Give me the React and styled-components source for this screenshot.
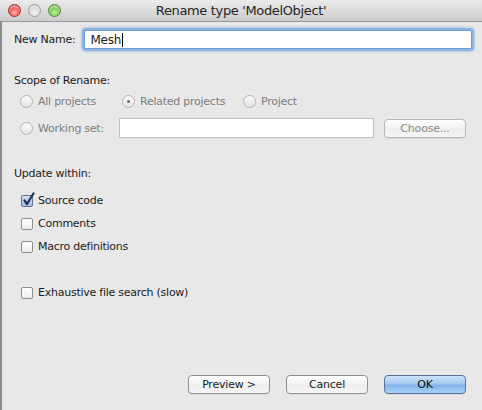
import styled, { createGlobalStyle } from "styled-components";

const GlobalStyle = createGlobalStyle`
  html, body {
    margin: 0;
    padding: 0;
    background: #e8e8e8;
  }
  body {
    font-family: "DejaVu Sans", "Liberation Sans", sans-serif;
    font-size: 11px;
    letter-spacing: -0.25px;
    color: #1b1b1b;
  }
`;

const Window = styled.div`
  display: flex;
  flex-direction: column;
  width: 482px;
  height: 410px;
  background: #e8e8e8;
  overflow: hidden;
`;

const TitleBar = styled.div`
  display: grid;
  grid-template-columns: 1fr auto 1fr;
  align-items: center;
  height: 21px;
  padding: 0 8px;
  background: linear-gradient(#ebebeb, #cbcbcb);
  border-bottom: 1px solid #9a9a9a;
`;

const Lights = styled.div`
  display: flex;
  gap: 7px;
`;

const Light = styled.span`
  width: 13px;
  height: 13px;
  border-radius: 50%;
  box-sizing: border-box;
  border: 1px solid ${(p) => p.$edge};
  background: radial-gradient(
    circle at 50% 70%,
    ${(p) => p.$light} 0%,
    ${(p) => p.$mid} 55%,
    ${(p) => p.$dark} 100%
  );
  box-shadow: inset 0 2px 2px rgba(255, 255, 255, 0.6);
`;

const Title = styled.div`
  font-size: 13px;
  color: #262626;
  letter-spacing: -0.35px;
`;

const Body = styled.div`
  flex: 1;
  display: flex;
  flex-direction: column;
  padding: 8px 16px 16px 12px;
  border-left: 2px solid #8c8c8c;
`;

const NameRow = styled.div`
  display: flex;
  align-items: center;
  gap: 9px;
`;

const Label = styled.span`
  color: ${(p) => (p.$disabled ? "#7d7d7d" : "#1b1b1b")};
  white-space: nowrap;
`;

const NameInput = styled.div`
  flex: 1;
  height: 17px;
  margin-right: -6px;
  background: #fff;
  border: 1px solid #6f9bd2;
  box-shadow: 0 0 0 2px #8fb4e2, 0 0 2px 3px rgba(120, 160, 215, 0.45);
  border-radius: 2px;
  display: flex;
  align-items: center;
  padding-left: 5px;
  font-size: 12px;
`;

const Caret = styled.span`
  display: inline-block;
  width: 1px;
  height: 14px;
  background: #000;
  margin-left: 1px;
`;

const SectionTitle = styled.div`
  margin-top: ${(p) => p.$gap}px;
`;

const OptionRow = styled.div`
  display: flex;
  align-items: center;
  margin-top: ${(p) => p.$gap}px;
  padding-left: 6px;
`;

const Option = styled.label`
  display: flex;
  align-items: center;
  gap: 5px;
  flex-shrink: 0;
  width: ${(p) => (p.$width ? `${p.$width}px` : "auto")};
`;

const Radio = styled.span`
  position: relative;
  width: 13px;
  height: 13px;
  border-radius: 50%;
  box-sizing: border-box;
  border: 1px solid #b4b4b4;
  background: linear-gradient(#fafafa, #e4e4e4);
  flex-shrink: 0;
  &::after {
    content: "";
    display: ${(p) => (p.$checked ? "block" : "none")};
    position: absolute;
    left: 4px;
    top: 4px;
    width: 3px;
    height: 3px;
    border-radius: 50%;
    background: #6a6a6a;
  }
`;

const SetInput = styled.div`
  flex: 1;
  height: 18px;
  background: #fff;
  border: 1px solid #c2c2c2;
`;

const Button = styled.button`
  width: ${(p) => p.$width || 82}px;
  height: 19px;
  padding: 0;
  box-sizing: border-box;
  font-family: inherit;
  font-size: 11px;
  letter-spacing: -0.2px;
  border-radius: 4px;
  flex-shrink: 0;
  margin-left: ${(p) => p.$left || 0}px;
  color: ${(p) => (p.$disabled ? "#8a8a8a" : p.$primary ? "#0d0d0d" : "#1b1b1b")};
  border: 1px solid
    ${(p) => (p.$disabled ? "#b8b8b8" : p.$primary ? "#5b6f9c" : "#8f8f8f")};
  background: ${(p) =>
    p.$primary
      ? "linear-gradient(#cfe3f8 0%, #a3c9ef 45%, #7fb3ea 55%, #a9d2f7 100%)"
      : "linear-gradient(#ffffff, #f1f1f1 50%, #ececec 51%, #f6f6f6)"};
  box-shadow: 0 1px 0 rgba(0, 0, 0, 0.06);
`;

const CheckRow = styled.label`
  display: flex;
  align-items: center;
  gap: 5px;
  margin-top: ${(p) => p.$gap}px;
  padding-left: 7px;
`;

const Box = styled.span`
  position: relative;
  width: 12px;
  height: 12px;
  box-sizing: border-box;
  border-radius: 2px;
  border: 1px solid ${(p) => (p.$checked ? "#5e6f94" : "#8e8e8e")};
  background: ${(p) =>
    p.$checked
      ? "linear-gradient(#d5e4f6, #9fbde4)"
      : "linear-gradient(#ffffff, #ececec)"};
  flex-shrink: 0;
`;

const Tick = styled.svg`
  position: absolute;
  left: 0;
  top: -4px;
`;

const Footer = styled.div`
  margin-top: auto;
  display: flex;
  justify-content: flex-end;
  gap: 16px;
`;

function Check({ checked, children, gap }) {
  return (
    <CheckRow $gap={gap}>
      <Box $checked={checked}>
        {checked && (
          <Tick width="13" height="14" viewBox="0 0 13 14">
            <path
              d="M2.5 8.5 L5 12 L11.5 1.5"
              fill="none"
              stroke="#1c2e57"
              strokeWidth="2.2"
              strokeLinecap="round"
              strokeLinejoin="round"
            />
          </Tick>
        )}
      </Box>
      <Label>{children}</Label>
    </CheckRow>
  );
}

export default function App() {
  return (
    <Window>
      <GlobalStyle />
      <TitleBar>
        <Lights>
          <Light $edge="#a52a2a" $light="#ffb3b3" $mid="#f0474a" $dark="#c31f24" />
          <Light $edge="#9d9d9d" $light="#f4f4f4" $mid="#d6d6d6" $dark="#b3b3b3" />
          <Light $edge="#4b8a2c" $light="#c6f3a6" $mid="#73c54a" $dark="#3f9a1f" />
        </Lights>
        <Title>Rename type 'ModelObject'</Title>
        <span />
      </TitleBar>
      <Body>
        <NameRow>
          <Label>New Name:</Label>
          <NameInput>
            Mesh
            <Caret />
          </NameInput>
        </NameRow>

        <SectionTitle $gap={25}>Scope of Rename:</SectionTitle>
        <OptionRow $gap={8}>
          <Option $width={102}>
            <Radio />
            <Label $disabled>All projects</Label>
          </Option>
          <Option $width={121}>
            <Radio $checked />
            <Label $disabled>Related projects</Label>
          </Option>
          <Option>
            <Radio />
            <Label $disabled>Project</Label>
          </Option>
        </OptionRow>
        <OptionRow $gap={10}>
          <Option $width={99}>
            <Radio />
            <Label $disabled>Working set:</Label>
          </Option>
          <SetInput />
          <Button $disabled $width={82} $left={10}>
            Choose...
          </Button>
        </OptionRow>

        <SectionTitle $gap={29}>Update within:</SectionTitle>
        <Check checked gap={14}>
          Source code
        </Check>
        <Check gap={10}>Comments</Check>
        <Check gap={10}>Macro definitions</Check>
        <Check gap={33}>Exhaustive file search (slow)</Check>

        <Footer>
          <Button>Preview &gt;</Button>
          <Button>Cancel</Button>
          <Button $primary>OK</Button>
        </Footer>
      </Body>
    </Window>
  );
}
